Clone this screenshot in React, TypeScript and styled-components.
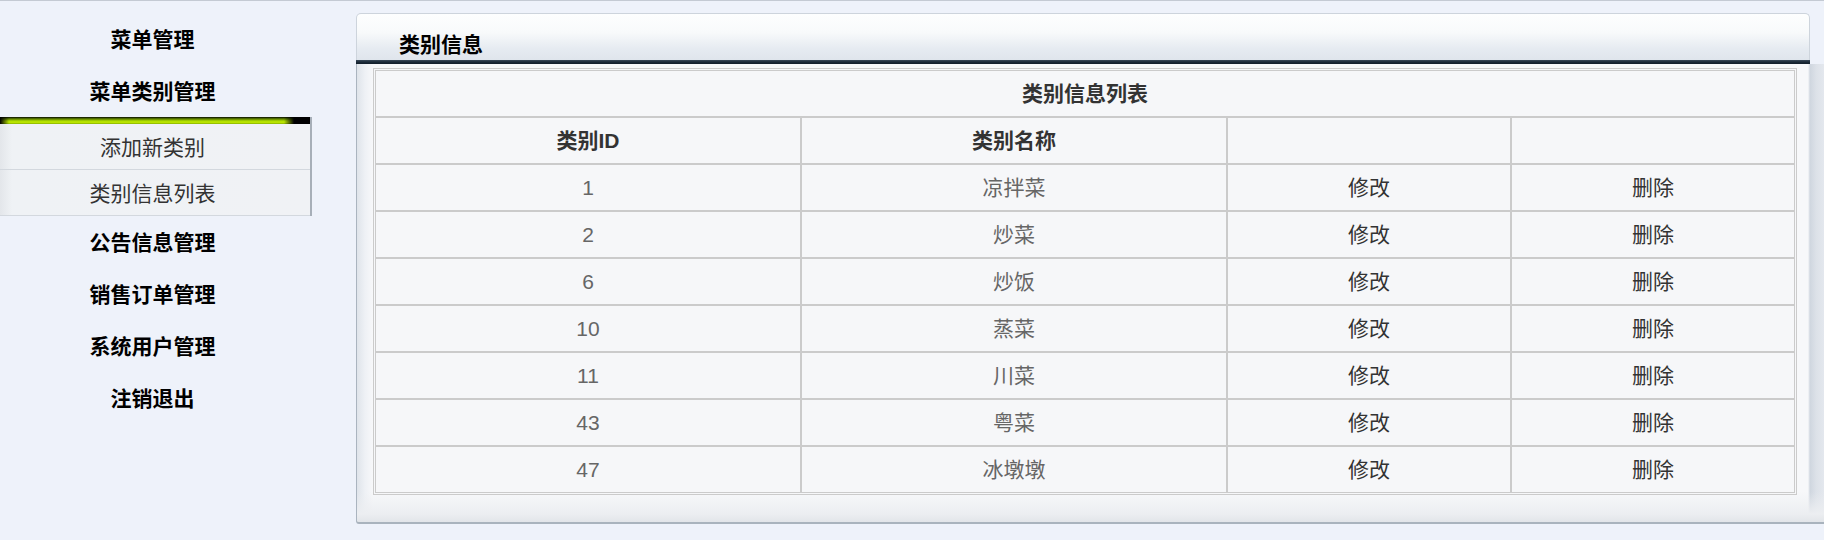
import React from "react";
import styled, { createGlobalStyle } from "styled-components";

const GlobalStyle = createGlobalStyle`
  html, body { margin: 0; padding: 0; }
  body {
    background: #eef2fa;
    font-family: "Liberation Sans", "Noto Sans CJK SC", sans-serif;
    color: #000;
  }
`;

const Page = styled.div`
  display: flex;
  align-items: flex-start;
  height: 539px;
  border-top: 1px solid #c4cad3;
  background: #eef2fa;
`;

const Sidebar = styled.nav`
  flex: none;
  width: 312px;
  padding-top: 12px;
  display: flex;
  flex-direction: column;
`;

const MenuItem = styled.div`
  height: 52px;
  padding-right: 7px;
  padding-bottom: 3px;
  box-sizing: border-box;
  display: flex;
  align-items: center;
  justify-content: center;
  font-size: 21px;
  font-weight: bold;
  color: #000;
`;

const SubMenu = styled.div`
  display: flex;
  flex-direction: column;
  border-right: 2px solid #a7afb8;
`;

const GreenBar = styled.div`
  height: 7px;
  background:
    linear-gradient(to right, #000 0, rgba(0,0,0,0) 9px, rgba(0,0,0,0) calc(100% - 26px), #000 calc(100% - 16px), #000 100%),
    linear-gradient(to bottom, #050800 0, #4d6a00 22%, #a8d800 55%, #c2ec00 75%, #86b000 100%);
`;

const SubItem = styled.div`
  height: 46px;
  padding-right: 5px;
  padding-bottom: 1px;
  box-sizing: border-box;
  display: flex;
  align-items: center;
  justify-content: center;
  font-size: 21px;
  color: #333;
  border-bottom: 1px solid #d3d8de;
  background: linear-gradient(to right, #e3e6ea 0, #eff2f5 12px, #f0f2f5 100%);
`;

const Main = styled.main`
  flex: 1;
  margin-left: 44px;
  margin-top: 12px;
  height: 511px;
  display: flex;
  flex-direction: column;
`;

const PanelHeader = styled.div`
  flex: none;
  height: 47px;
  margin-right: 14px;
  border: 1px solid #cdd4dc;
  border-bottom: none;
  border-radius: 5px 5px 0 0;
  background: linear-gradient(to bottom, #fdfefe 0, #f8fafb 40%, #e6ebf1 75%, #dfe5ec 100%);
  display: flex;
  align-items: flex-end;
  padding-left: 42px;
  padding-bottom: 0;
  box-sizing: border-box;
`;

const PanelTitle = styled.h2`
  margin: 0;
  font-size: 21px;
  font-weight: bold;
  line-height: 30px;
  color: #000;
`;

const HeaderLine = styled.div`
  flex: none;
  height: 4px;
  margin-right: 14px;
  background: linear-gradient(to bottom, #3b4b5a 0, #1b2a38 50%, #121e2a 100%);
`;

const PanelBody = styled.div`
  flex: 1;
  display: flex;
  flex-direction: column;
  padding: 4px 27px 26px 16px;
  border-left: 1px solid #aab4bf;
  border-bottom: 2px solid #a9b3bd;
  border-bottom-left-radius: 3px;
  background:
    linear-gradient(to bottom, rgba(247,248,250,0) 0, rgba(247,248,250,0) calc(100% - 30px), #eceef1 calc(100% - 8px), #e2e5e9 100%),
    linear-gradient(to right, #dfe4ea 0, #eef1f5 8px, #f7f8fa 16px, #f7f8fa calc(100% - 16px), #cfd6df calc(100% - 14px), #dce1e8 calc(100% - 8px), #e4e8ee 100%);
`;

const Table = styled.table`
  width: 100%;
  table-layout: fixed;
  border: 1px solid #cbcbcb;
  padding: 1px;
  border-spacing: 0;
  background: #f6f7f9;
`;

const Cell = styled.td<{ $strong?: boolean; $tone?: "muted" | "dark" }>`
  height: 45px;
  padding: 0;
  border: 1px solid #cbcbcb;
  text-align: center;
  vertical-align: middle;
  font-size: 21px;
  line-height: 24px;
  font-weight: ${(p) => (p.$strong ? "bold" : "normal")};
  color: ${(p) => (p.$strong ? "#333" : p.$tone === "muted" ? "#666" : "#333")};
`;

const ActionLink = styled.a`
  color: #333;
  text-decoration: none;
  cursor: pointer;
`;

const rows = [
  { id: 1, name: "凉拌菜" },
  { id: 2, name: "炒菜" },
  { id: 6, name: "炒饭" },
  { id: 10, name: "蒸菜" },
  { id: 11, name: "川菜" },
  { id: 43, name: "粤菜" },
  { id: 47, name: "冰墩墩" },
];

export default function App() {
  return (
    <>
      <GlobalStyle />
      <Page>
        <Sidebar>
          <MenuItem>菜单管理</MenuItem>
          <MenuItem>菜单类别管理</MenuItem>
          <SubMenu>
            <GreenBar />
            <SubItem>添加新类别</SubItem>
            <SubItem>类别信息列表</SubItem>
          </SubMenu>
          <MenuItem>公告信息管理</MenuItem>
          <MenuItem>销售订单管理</MenuItem>
          <MenuItem>系统用户管理</MenuItem>
          <MenuItem>注销退出</MenuItem>
        </Sidebar>
        <Main>
          <PanelHeader>
            <PanelTitle>类别信息</PanelTitle>
          </PanelHeader>
          <HeaderLine />
          <PanelBody>
            <Table>
              <colgroup>
                <col style={{ width: "30%" }} />
                <col style={{ width: "30%" }} />
                <col style={{ width: "20%" }} />
                <col style={{ width: "20%" }} />
              </colgroup>
              <thead>
                <tr>
                  <Cell as="th" colSpan={4} $strong>
                    类别信息列表
                  </Cell>
                </tr>
                <tr>
                  <Cell as="th" $strong>类别ID</Cell>
                  <Cell as="th" $strong>类别名称</Cell>
                  <Cell as="th" $strong></Cell>
                  <Cell as="th" $strong></Cell>
                </tr>
              </thead>
              <tbody>
                {rows.map((r) => (
                  <tr key={r.id}>
                    <Cell $tone="muted">{r.id}</Cell>
                    <Cell $tone="muted">{r.name}</Cell>
                    <Cell $tone="dark">
                      <ActionLink>修改</ActionLink>
                    </Cell>
                    <Cell $tone="dark">
                      <ActionLink>删除</ActionLink>
                    </Cell>
                  </tr>
                ))}
              </tbody>
            </Table>
          </PanelBody>
        </Main>
      </Page>
    </>
  );
}
